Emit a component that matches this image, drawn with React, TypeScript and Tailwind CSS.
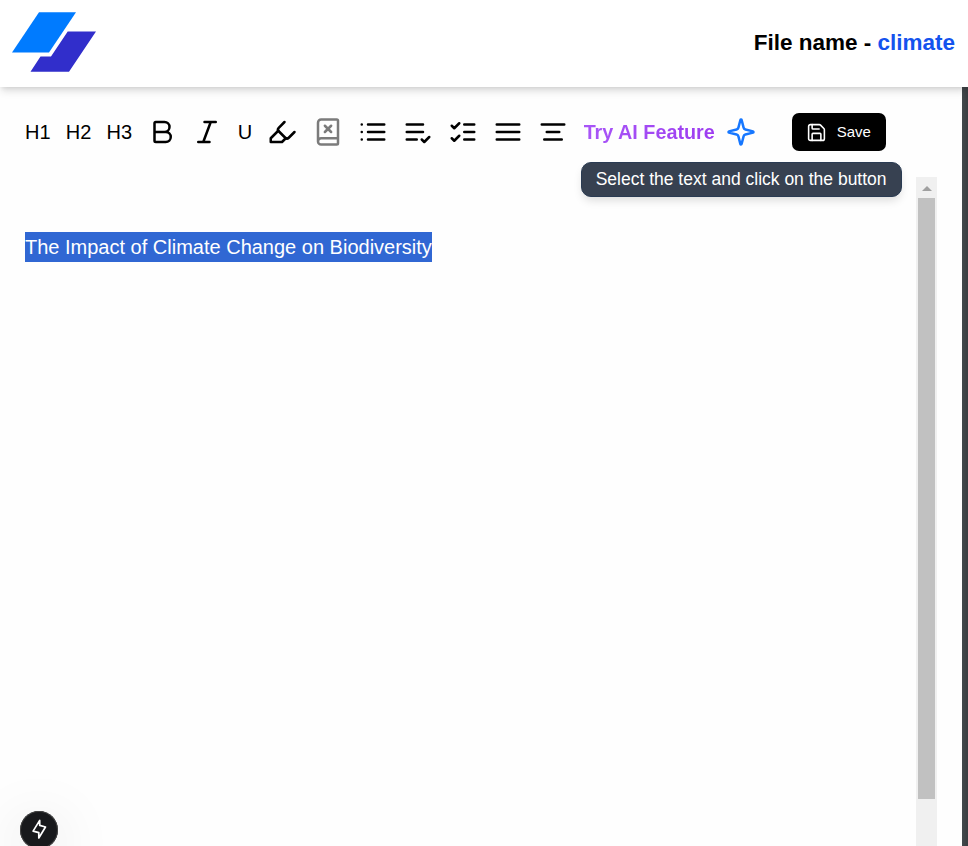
import type { ReactNode } from "react";

function Icon({ children, className = "size-[30px]", width = 2 }: { children: ReactNode; className?: string; width?: number }) {
  return (
    <svg viewBox="0 0 24 24" fill="none" stroke="currentColor" strokeWidth={width} strokeLinecap="round" strokeLinejoin="round" className={`shrink-0 ${className}`}>
      {children}
    </svg>
  );
}

function Logo() {
  return (
    <svg viewBox="0 0 84 60" className="h-[60px] w-[84px]">
      <polygon points="27,0.3 64,0.3 37,40.5 0,40.5" fill="#007bff" />
      <polygon points="55.7,19.5 84,19.5 57,59.7 18.5,59.7 28.5,44.5 39,44.5" fill="#312ecb" />
    </svg>
  );
}

function Header() {
  return (
    <header className="relative z-10 flex h-[87px] shrink-0 items-center justify-between bg-white pr-[13px] pl-3 shadow-[0_5px_8px_-1px_rgba(0,0,0,0.13),0_2px_5px_-2px_rgba(0,0,0,0.12)]">
      <div className="-mt-[3px]">
        <Logo />
      </div>
      <h1 className="-mt-[2px] text-[22.5px] leading-[30px] font-bold whitespace-nowrap">
        File name - <span className="text-[#1453ee]">climate</span>
      </h1>
    </header>
  );
}

function Toolbar() {
  return (
    <div className="flex h-[38px] items-center gap-[15.2px] text-[20px] leading-[30px]">
      <button>H1</button>
      <button>H2</button>
      <button>H3</button>
      <Icon><path d="M6 12h9a4 4 0 0 1 0 8H7a1 1 0 0 1-1-1V5a1 1 0 0 1 1-1h7a4 4 0 0 1 0 8" /></Icon>
      <Icon><path d="M19 4h-9M14 20H5M15 4 9 20" /></Icon>
      <button>U</button>
      <Icon><path d="m9 11-6 6v3h9l3-3" /><path d="m22 12-4.6 4.6a2 2 0 0 1-2.8 0l-5.2-5.2a2 2 0 0 1 0-2.8L14 4" /></Icon>
      <Icon className="size-[30px] text-[#7b7b7b]">
        <path d="m14.5 7-5 5M9.5 7l5 5" />
        <path d="M4 19.5v-15A2.5 2.5 0 0 1 6.5 2H19a1 1 0 0 1 1 1v18a1 1 0 0 1-1 1H6.5a1 1 0 0 1 0-5H20" />
      </Icon>
      <Icon><path d="M3 12h.01M3 18h.01M3 6h.01M8 12h13M8 18h13M8 6h13" /></Icon>
      <Icon><path d="M11 18H3M16 12H3M16 6H3" /><path d="m15 18 2 2 4-4" /></Icon>
      <Icon><path d="m3 17 2 2 4-4M3 7l2 2 4-4M13 6h8M13 12h8M13 18h8" /></Icon>
      <Icon><path d="M3 12h18M3 18h18M3 6h18" /></Icon>
      <Icon><path d="M17 12H7M19 18H5M21 6H3" /></Icon>
      <button className="relative flex shrink-0 items-center gap-[11px] font-bold whitespace-nowrap">
        <span className="bg-gradient-to-r from-[#a855f7] to-[#9d3cf0] bg-clip-text text-[19.8px] text-transparent">Try AI Feature</span>
        <Icon className="size-[30px] text-[#1677ff]">
          <path d="M9.937 15.5A2 2 0 0 0 8.5 14.063l-6.135-1.582a.5.5 0 0 1 0-.962L8.5 9.936A2 2 0 0 0 9.937 8.5l1.582-6.135a.5.5 0 0 1 .963 0L14.063 8.5A2 2 0 0 0 15.5 9.937l6.135 1.581a.5.5 0 0 1 0 .964L15.5 14.063a2 2 0 0 0-1.437 1.437l-1.582 6.135a.5.5 0 0 1-.963 0z" />
        </Icon>
        <span className="absolute top-[45px] -left-[3px] flex h-[35px] w-[321px] items-center justify-center rounded-[10px] border border-[#2a3b53] bg-[#374151] pb-[2px] text-[17.5px] font-normal text-white shadow-[0_5px_10px_-2px_rgba(0,0,0,0.15)]">
          Select the text and click on the button
        </span>
      </button>
      <button className="ml-[20.6px] flex h-[38px] w-[94px] shrink-0 items-center justify-center gap-[9.5px] rounded-[7px] bg-black text-[15px] text-white">
        <Icon className="size-[21px]" width={1.8}>
          <path d="M15.2 3a2 2 0 0 1 1.4.6l3.8 3.8a2 2 0 0 1 .6 1.4V19a2 2 0 0 1-2 2H5a2 2 0 0 1-2-2V5a2 2 0 0 1 2-2z" />
          <path d="M17 21v-7a1 1 0 0 0-1-1H8a1 1 0 0 0-1 1v7M7 3v4a1 1 0 0 0 1 1h7" />
        </Icon>
        Save
      </button>
    </div>
  );
}

function Scrollbar() {
  return (
    <div className="flex w-[21px] shrink-0 flex-col items-center bg-[#f0f0f0]">
      <div className="flex h-[21px] items-center justify-center pt-[1px]">
        <div className="border-x-[5px] border-b-[5px] border-x-transparent border-b-[#a0a0a0]" />
      </div>
      <div className="h-[601px] w-[17px] bg-[#c1c1c1]" />
    </div>
  );
}

export default function App() {
  return (
    <div className="relative flex h-[846px] w-[968px] flex-col overflow-hidden bg-white font-['Liberation_Sans',Arial,sans-serif] text-black">
      <Header />
      <div className="flex min-h-0 flex-1">
        <main className="flex min-w-0 flex-1 flex-col bg-[#fefefe] pt-[26px] pl-[25px]">
          <Toolbar />
          <div className="mt-[26px] flex min-h-0 flex-1 pr-[25px]">
            <div className="flex-1 pt-[55px]">
              <p className="w-fit bg-[#3067d3] text-[20px] leading-[30px] whitespace-nowrap text-white">
                The Impact of Climate Change on Biodiversity
              </p>
            </div>
            <Scrollbar />
          </div>
        </main>
        <div className="w-[6px] shrink-0 bg-gradient-to-r from-[#42494c] to-[#393d40]" />
      </div>
      <div className="absolute top-[811px] left-[20px] size-[38px] rounded-full bg-[#18191c] text-white shadow-[inset_0_0_0_1px_#444,0_12px_60px_rgba(0,0,0,0.15)]">
        <svg viewBox="0 0 38 38" className="size-[38px]" fill="none" stroke="currentColor" strokeWidth="1.7" strokeLinejoin="round">
          <path d="M19.7 9.4 13.1 20.1 18.8 21.6V27L25.5 16 19.7 14.4z" />
        </svg>
      </div>
    </div>
  );
}
